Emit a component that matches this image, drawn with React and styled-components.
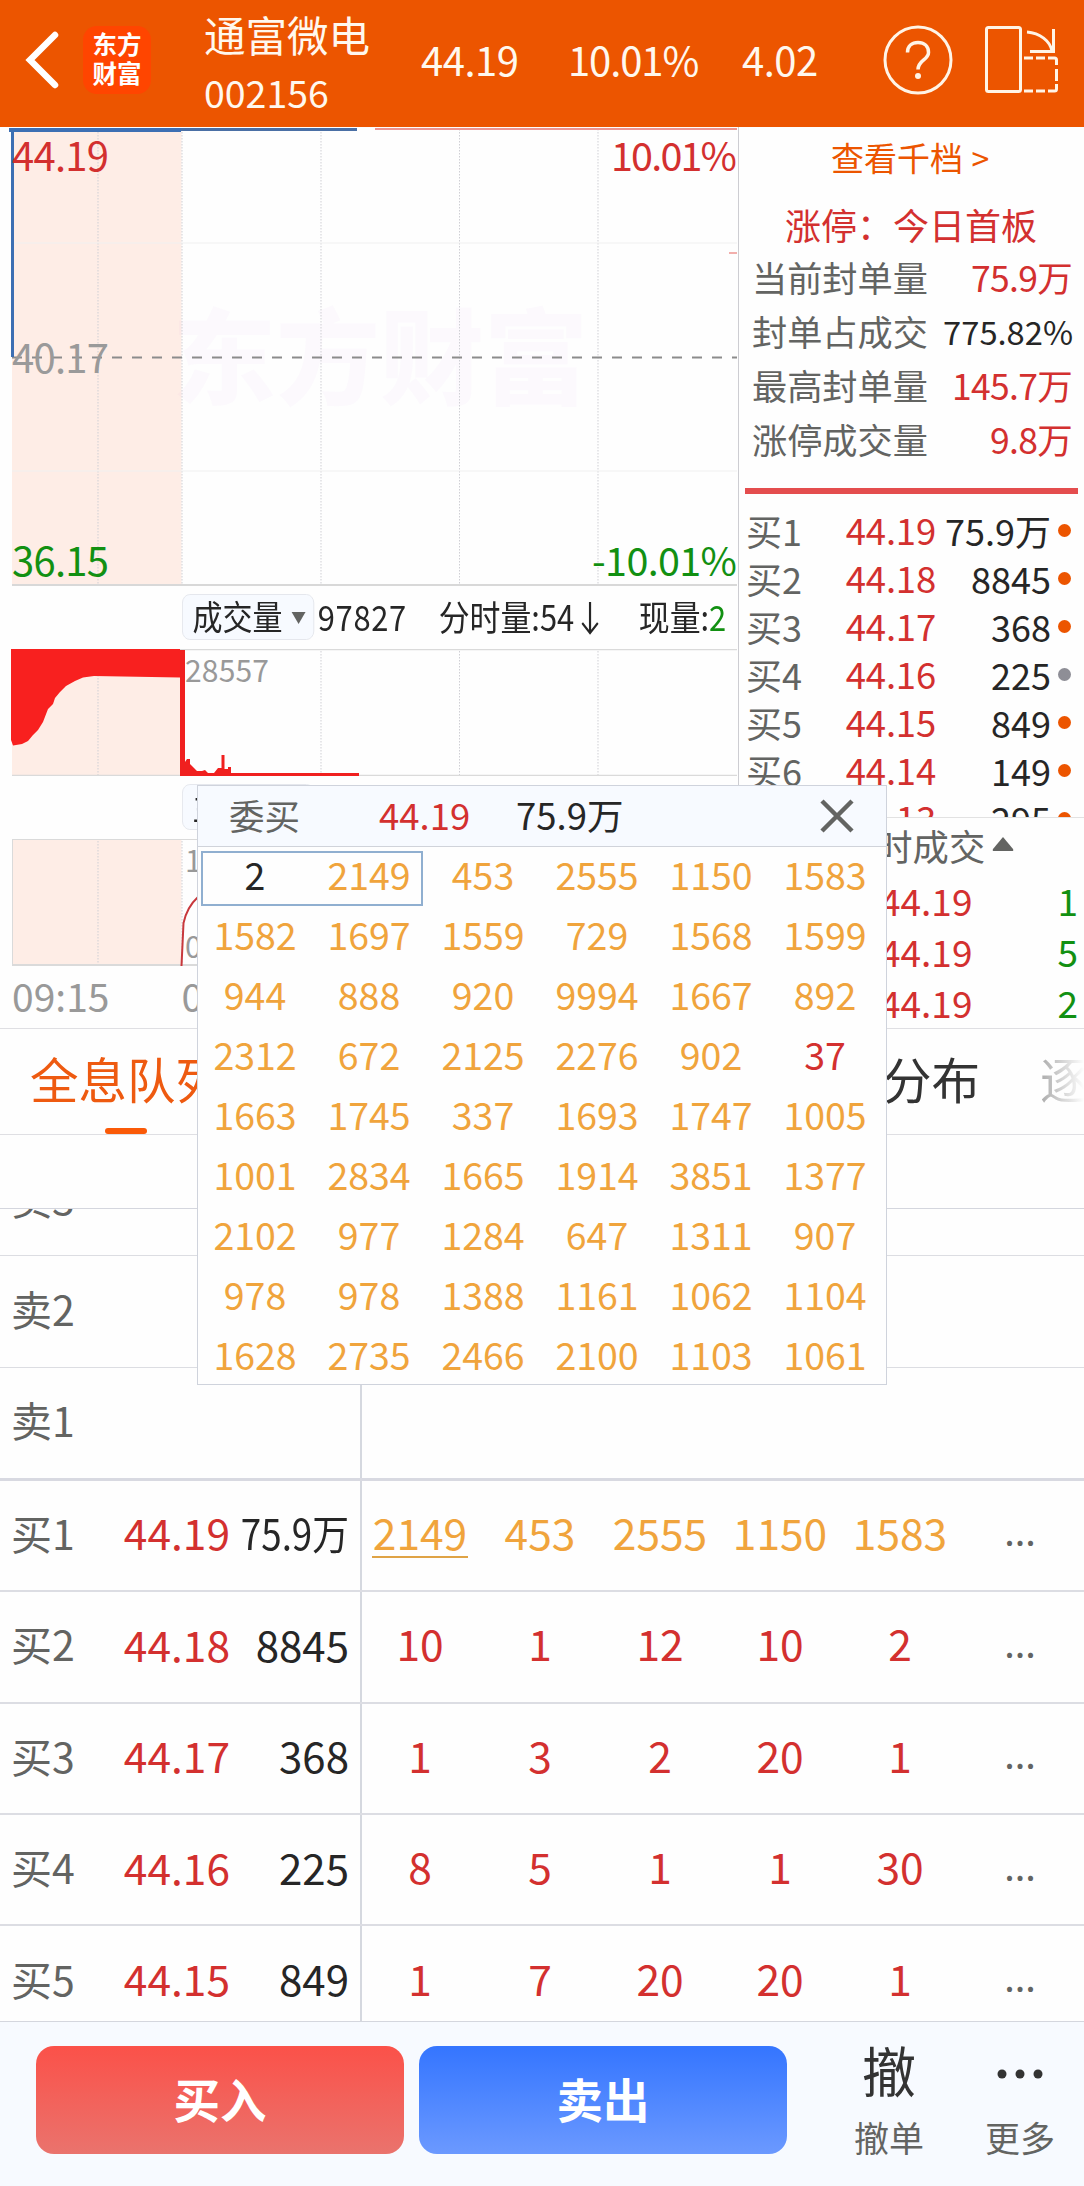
import React from 'react';
import styled, { createGlobalStyle } from 'styled-components';

const RED = '#d3302f';
const GREEN = '#129012';
const ORANGE = '#f0a43c';
const BRAND = '#ec5500';
const DARK = '#262626';
const GREY = '#636462';

const stats = [
  { label: '当前封单量', value: '75.9万', color: RED },
  { label: '封单占成交', value: '775.82%', color: DARK, small: true },
  { label: '最高封单量', value: '145.7万', color: RED },
  { label: '涨停成交量', value: '9.8万', color: RED },
];

const bids = [
  { name: '买1', price: '44.19', volume: '75.9万', dot: BRAND },
  { name: '买2', price: '44.18', volume: '8845', dot: BRAND },
  { name: '买3', price: '44.17', volume: '368', dot: BRAND },
  { name: '买4', price: '44.16', volume: '225', dot: '#8e8e96' },
  { name: '买5', price: '44.15', volume: '849', dot: BRAND },
  { name: '买6', price: '44.14', volume: '149', dot: BRAND },
  { name: '买7', price: '44.13', volume: '295', dot: BRAND },
];

const trades = [
  { price: '44.19', volume: '1' },
  { price: '44.19', volume: '5' },
  { price: '44.19', volume: '2' },
];

const orders = [
  2, 2149, 453, 2555, 1150, 1583,
  1582, 1697, 1559, 729, 1568, 1599,
  944, 888, 920, 9994, 1667, 892,
  2312, 672, 2125, 2276, 902, 37,
  1663, 1745, 337, 1693, 1747, 1005,
  1001, 2834, 1665, 1914, 3851, 1377,
  2102, 977, 1284, 647, 1311, 907,
  978, 978, 1388, 1161, 1062, 1104,
  1628, 2735, 2466, 2100, 1103, 1061,
];

const queueRows = [
  { name: '卖3', queue: [] },
  { name: '卖2', queue: [] },
  { name: '卖1', queue: [], last: true },
  { name: '买1', price: '44.19', volume: '75.9万', narrow: true, big: true, queue: [2149, 453, 2555, 1150, 1583] },
  { name: '买2', price: '44.18', volume: '8845', queue: [10, 1, 12, 10, 2] },
  { name: '买3', price: '44.17', volume: '368', queue: [1, 3, 2, 20, 1] },
  { name: '买4', price: '44.16', volume: '225', queue: [8, 5, 1, 1, 30] },
  { name: '买5', price: '44.15', volume: '849', queue: [1, 7, 20, 20, 1] },
];

const orderColor = (value) => {
  if (value < 10) return DARK;
  return value < 100 ? RED : ORANGE;
};

const gridLines = [98, 182, 321, 459.5, 598];

const Grid = ({ height }) => (
  <>
    {gridLines.map((x) => (
      <line key={x} x1={x} x2={x} y1="2" y2={height} stroke="#cfcfd4" strokeDasharray="1.5 1.5" />
    ))}
  </>
);

const PriceChart = () => (
  <Chart width="737" height="459" viewBox="0 0 737 459">
    <rect x="12" y="1" width="169.5" height="457" fill="#feede6" />
    <text x="172" y="270" fontSize="104" fontWeight="900" fill="#b000c0" fillOpacity="0.018">东方财富</text>
    <Grid height={458} />
    <path d="M12 116H737M12 344H737" stroke="#f0f0f0" />
    <path d="M12 230.5H737" stroke="#8c8c8c" strokeWidth="2" strokeDasharray="10 10" />
    <path d="M12.5 4V230" stroke="#3d6fb3" strokeWidth="3" />
    <path d="M9 3H181" stroke="#3d6fb3" strokeWidth="4" />
    <path d="M181 2.5H357" stroke="#4a6fa5" strokeWidth="3" />
    <path d="M375 2H737" stroke="#ee9490" strokeWidth="2" />
    <path d="M729 126H737" stroke="#ee9490" strokeWidth="1.5" />
    <path d="M12 458H737" stroke="#d8d8d8" strokeWidth="2" />
    <text x="12" y="43.5" fontSize="40" textLength="97" fill={RED}>44.19</text>
    <text x="737" y="43.5" fontSize="39.5" textAnchor="end" textLength="126" fill={RED}>10.01%</text>
    <text x="12" y="246" fontSize="40" textLength="97" fill="#9a9a9a">40.17</text>
    <text x="12" y="448.5" fontSize="40" textLength="97" fill={GREEN}>36.15</text>
    <text x="737" y="448.5" fontSize="39.5" textAnchor="end" textLength="145" fill={GREEN}>-10.01%</text>
  </Chart>
);

const VolumeChart = () => (
  <Chart width="737" height="127" viewBox="0 0 737 127">
    <rect x="12" y="0" width="169.5" height="127" fill="#feede6" />
    <Grid height={126} />
    <path d="M12 .5H737M12 126.5H737" stroke="#dadada" strokeWidth="1.5" />
    <path
      d="M11 0H180V28.5L94 27L83 28.5L75 32L66 37L60 43L55 49L53 55L48 60L43 73L38 81L33 86L28 92L22 95L13 96.5L11 91Z"
      fill="#f8201f"
    />
    <path
      d="M180 1H185V113L187 110H190V115L194 119L197 122H202L205 121L208 124H214L218 119H221.5V106H224.5V120H228V118H231V124H359V127H180Z"
      fill="#f0201f"
    />
    <text x="185" y="33" fontSize="30" textLength="84" fill="#999">28557</text>
  </Chart>
);

const FlowChart = () => (
  <Chart width="737" height="127" viewBox="0 0 737 127">
    <rect x="12" y="0" width="169.5" height="127" fill="#feede6" />
    <Grid height={126} />
    <path d="M12 .5H737M12.5 0V127" stroke="#dadada" fill="none" />
    <path d="M12 126H737" stroke="#dadada" strokeWidth="2" />
    <path d="M181.5 127L183.5 84Q187 68 198 58" fill="none" stroke="#c8383c" strokeWidth="2" />
    <text x="185" y="33" fontSize="30" fill="#999">1.00</text>
    <text x="185" y="119" fontSize="30" fill="#999">0.00</text>
  </Chart>
);

const RotateIcon = () => (
  <svg width="76" height="70" viewBox="0 0 76 70" fill="none" stroke="#fff4e6" strokeWidth="3">
    <rect x="3.5" y="2.5" width="34" height="64" rx="2" />
    <path d="M44 7C57 8 67 16 69 26M70.5 4V26.5H47" />
    <path d="M41 33H50M53 33H62M65 33H71.5Q73.5 33 73.5 35V40M73.5 44V56M73.5 59V64Q73.5 66 71.5 66H65M62 66H53M50 66H41" />
  </svg>
);

const App = () => (
  <>
    <GlobalStyle />
    <Screen>
      <Header>
        <BackIcon width="36" height="60" viewBox="0 0 36 60">
          <path d="M31 5L6 30L31 55" fill="none" stroke="#fff" strokeWidth="6.5" strokeLinecap="round" />
        </BackIcon>
        <Logo>
          <span>东方</span>
          <span>财富</span>
        </Logo>
        <Stock>
          <StockName>通富微电</StockName>
          <StockCode>002156</StockCode>
        </Stock>
        <Quote $width={147}>44.19</Quote>
        <Quote $width={174} $tight>10.01%</Quote>
        <Quote $width={161}>4.02</Quote>
        <svg width="70" height="70" viewBox="0 0 70 70" fill="none" stroke="#fff4e6" strokeWidth="3">
          <circle cx="35" cy="35" r="33" />
          <path d="M24.5 27.5C24.5 21 29 17.5 35 17.5S45.5 21 45.5 27.5C45.5 35 35 35 35 44.5" strokeWidth="3.5" />
          <circle cx="35" cy="51" r="3" fill="#fff4e6" stroke="none" />
        </svg>
        <RotateSlot><RotateIcon /></RotateSlot>
      </Header>

      <Market>
        <ChartColumn>
          <PriceChart />
          <Toolbar>
            <Squeezed>
              <Chip>成交量<Caret /></Chip>
              <Figure $width={145} $loose>97827</Figure>
              <Figure $width={230}>分时量:54<Arrow width="20" height="36" viewBox="0 0 20 36"><path d="M10 2V33M1 23L10 33L19 23" fill="none" stroke={DARK} strokeWidth="2.5" /></Arrow></Figure>
              <Figure>现量:<Down>2</Down></Figure>
            </Squeezed>
          </Toolbar>
          <VolumeChart />
          <Toolbar>
            <Squeezed>
              <Chip>主力量<Caret /></Chip>
            </Squeezed>
          </Toolbar>
          <FlowChart />
          <TimeAxis>
            <span>09:15</span>
            <span>09:30</span>
          </TimeAxis>
        </ChartColumn>

        <Side>
          <MoreDepth>查看千档 <b>&gt;</b></MoreDepth>
          <LimitTitle>涨停：今日首板</LimitTitle>
          {stats.map((item) => (
            <StatRow key={item.label}>
              <StatLabel>{item.label}</StatLabel>
              <StatValue $color={item.color} $small={item.small}>{item.value}</StatValue>
            </StatRow>
          ))}
          <RedBar />
          <BidList>
            {bids.map((bid) => (
              <BidRow key={bid.name}>
                <BidName>{bid.name}</BidName>
                <BidPrice>{bid.price}</BidPrice>
                <BidVolume>{bid.volume}</BidVolume>
                <Dot $color={bid.dot} />
              </BidRow>
            ))}
          </BidList>
          <TradeTitle>分时成交<UpCaret width="22" height="16" viewBox="0 0 22 16"><path d="M11 1L21 13Q22 15 20 15H2Q0 15 1 13Z" fill={GREY} /></UpCaret></TradeTitle>
          {trades.map((trade) => (
            <TradeRow key={trade.volume}>
              <TradePrice>{trade.price}</TradePrice>
              <Down>{trade.volume}</Down>
            </TradeRow>
          ))}
        </Side>
      </Market>

      <Tabs>
        <Tab $active>全息队列</Tab>
        <Tab>成交分布</Tab>
        <Tab $faded>逐笔</Tab>
      </Tabs>
      <Spacer />

      <QueueView>
        <QueueTable>
          {queueRows.map((row) => (
            <QueueRow key={row.name} $last={row.last} $light={!row.price}>
              <QueueInfo>
                <QueueName>{row.name}</QueueName>
                <QueuePrice>{row.price}</QueuePrice>
                <QueueVolume $narrow={row.narrow}>{row.volume}</QueueVolume>
              </QueueInfo>
              <QueueCells>
                {row.queue.map((count, i) => (
                  <QueueCell key={i} $color={row.big ? ORANGE : RED}>
                    {row.big && i === 0 ? <Underlined>{count}</Underlined> : count}
                  </QueueCell>
                ))}
                {row.queue.length > 0 && <Ellipsis>...</Ellipsis>}
              </QueueCells>
            </QueueRow>
          ))}
        </QueueTable>
      </QueueView>

      <Footer>
        <TradeButton $from="#fb5149" $to="#ea736d">买入</TradeButton>
        <TradeButton $from="#3475ff" $to="#6b99ff">卖出</TradeButton>
        <Action $width={202}>
          <ActionGlyph>撤</ActionGlyph>
          <ActionLabel>撤单</ActionLabel>
        </Action>
        <Action $width={58}>
          <ActionGlyph>
            <MoreDots width="48" height="12" viewBox="0 0 48 12" fill="#333">
              <circle cx="6" cy="6" r="4.5" />
              <circle cx="24" cy="6" r="4.5" />
              <circle cx="42" cy="6" r="4.5" />
            </MoreDots>
          </ActionGlyph>
          <ActionLabel>更多</ActionLabel>
        </Action>
      </Footer>

      <Popup>
        <PopupHeader>
          <PopupSide>委买</PopupSide>
          <PopupPrice>44.19</PopupPrice>
          <span>75.9万</span>
          <Close width="34" height="34" viewBox="0 0 34 34">
            <path d="M2 2L32 32M32 2L2 32" stroke={GREY} strokeWidth="4.5" />
          </Close>
        </PopupHeader>
        <OrderGrid>
          {orders.map((value, i) => (
            <Order key={i} $color={orderColor(value)}>{value}</Order>
          ))}
          <Selection />
        </OrderGrid>
      </Popup>
    </Screen>
  </>
);

export default App;

const GlobalStyle = createGlobalStyle`
  * {
    box-sizing: border-box;
  }
  body {
    margin: 0;
    background: #fefefe;
    font-family: 'Noto Sans CJK SC', sans-serif;
    color: ${DARK};
  }
  svg {
    display: block;
    flex: none;
  }
`;

const Screen = styled.div`
  position: relative;
  width: 1084px;
  height: 2186px;
  overflow: hidden;
  display: flex;
  flex-direction: column;
  white-space: nowrap;
`;

const Header = styled.header`
  height: 127px;
  flex: none;
  display: flex;
  align-items: center;
  padding: 0 0 7px 24px;
  background: ${BRAND};
  color: #fff8ee;
`;

const BackIcon = styled.svg`
  margin-right: 23px;
`;

const Logo = styled.div`
  width: 68px;
  height: 68px;
  display: flex;
  flex-direction: column;
  align-items: center;
  padding-top: 3px;
  border-radius: 14px;
  background: #ff4500;
  color: #fff;
  font-size: 24.5px;
  font-weight: 700;
  line-height: 29px;
`;

const Stock = styled.div`
  width: 197px;
  margin-left: 53px;
`;

const StockName = styled.div`
  font-size: 41.5px;
  line-height: 58px;
  margin-top: 6px;
`;

const StockCode = styled.div`
  font-size: 37.5px;
  line-height: 58px;
`;

const Quote = styled.div`
  width: ${(props) => props.$width}px;
  padding: 0 0 3px 20px;
  font-size: 40px;
  letter-spacing: ${(props) => (props.$tight ? '-1.1px' : '-0.5px')};
  line-height: 60px;
`;

const RotateSlot = styled.div`
  margin-left: 30px;
`;

const Market = styled.section`
  display: flex;
  height: 902px;
  flex: none;
  border-bottom: 1px solid #dfdfe3;
`;

const ChartColumn = styled.div`
  width: 739px;
  flex: none;
  border-right: 1px solid #cdcdd2;
`;

const Chart = styled.svg`
  font-family: 'Noto Sans CJK SC', sans-serif;
`;

const Toolbar = styled.div`
  height: 63px;
  display: flex;
  align-items: center;
  padding: 0 0 1px 182px;
`;

/* figures in the indicator bar are set narrower than the rest */
const Squeezed = styled.div`
  display: flex;
  flex: none;
  align-items: center;
  width: 630px;
  transform: scaleX(0.87);
  transform-origin: left;
  font-size: 35.5px;
  line-height: 44px;
`;

const Chip = styled.div`
  display: flex;
  align-items: center;
  width: 152px;
  height: 46px;
  padding: 0 0 4px 11px;
  border: 1px solid #e4e6ec;
  border-radius: 9px;
  background: #f7faff;
  font-size: 34.5px;
`;

const Caret = styled.i`
  margin: 5px 0 0 10px;
  border: 8px solid transparent;
  border-top: 12px solid ${GREY};
  border-bottom: 0;
`;

const Figure = styled.div`
  display: flex;
  width: ${(props) => (props.$width ? `${props.$width}px` : 'auto')};
  padding-bottom: 3px;
  letter-spacing: ${(props) => (props.$loose ? '0.8px' : '0')};
  &:nth-child(2) {
    margin-left: 4px;
  }
  &:nth-child(3) {
    margin-left: -6px;
  }
`;

const Arrow = styled.svg`
  margin: 6px 0 0 8px;
`;

const Down = styled.span`
  color: ${GREEN};
`;

const TimeAxis = styled.div`
  display: flex;
  gap: 72px;
  padding-left: 12px;
  color: #999;
  font-size: 39px;
  line-height: 58px;
`;

const Side = styled.aside`
  flex: 1;
  min-width: 0;
`;

const MoreDepth = styled.div`
  height: 59px;
  padding-left: 92px;
  font-size: 33px;
  line-height: 60px;
  color: ${BRAND};
  b {
    font-weight: 400;
    margin-left: 1px;
    font-size: 32px;
  }
`;

const LimitTitle = styled.div`
  height: 65px;
  padding-left: 46px;
  font-size: 36px;
  line-height: 77px;
  color: ${RED};
`;

const StatRow = styled.div`
  display: flex;
  justify-content: space-between;
  align-items: center;
  height: 54px;
  padding: 0 13px 3px;
`;

const StatLabel = styled.span`
  font-size: 35.2px;
  color: ${GREY};
`;

const StatValue = styled.span`
  font-size: ${(props) => (props.$small ? 32.7 : 35.5)}px;
  letter-spacing: ${(props) => (props.$small ? 0 : -0.7)}px;
  margin-right: ${(props) => (props.$small ? -2 : -1)}px;
  color: ${(props) => props.$color};
`;

const RedBar = styled.div`
  height: 6px;
  margin: 21px 6px 14px;
  background: #e44d4e;
`;

const BidList = styled.div`
  height: 310px;
  overflow: hidden;
  border-bottom: 1px solid #e2e2e2;
`;

const BidRow = styled.div`
  display: flex;
  align-items: center;
  height: 48px;
  padding: 0 13px 5px 7px;
`;

const BidName = styled.span`
  width: 80px;
  font-size: 36px;
  color: ${GREY};
`;

const BidPrice = styled.span`
  width: 110px;
  text-align: right;
  font-size: 36.5px;
  letter-spacing: -0.2px;
  color: ${RED};
`;

const BidVolume = styled.span`
  width: 115px;
  text-align: right;
  font-size: 36px;
`;

const Dot = styled.i`
  width: 13px;
  height: 13px;
  margin: 1px 0 0 auto;
  border-radius: 50%;
  background: ${(props) => props.$color};
`;

const TradeTitle = styled.div`
  display: flex;
  align-items: center;
  height: 57px;
  padding: 0 0 3px 101px;
  font-size: 36.3px;
  color: ${GREY};
`;

const UpCaret = styled.svg`
  margin: -2px 0 0 7px;
`;

const TradeRow = styled.div`
  display: flex;
  justify-content: space-between;
  align-items: center;
  height: 51px;
  padding: 0 6px 2px 141px;
  font-size: 37px;
`;

const TradePrice = styled.span`
  color: ${RED};
`;

const Tabs = styled.nav`
  display: flex;
  height: 106px;
  flex: none;
  padding-left: 30px;
  border-bottom: 1px solid #dfdfe3;
`;

const Tab = styled.div`
  flex: none;
  display: flex;
  flex-direction: column;
  font-size: 48.5px;
  line-height: 99px;
  color: ${(props) => (props.$active ? '#ee5a10' : '#333')};
  &:nth-child(2) {
    margin-left: 562px;
  }
  &:nth-child(3) {
    margin-left: 60px;
  }
  ${(props) => props.$active && `
    &::after {
      content: '';
      width: 42px;
      height: 6px;
      margin: 0 0 0 75px;
      border-radius: 3px;
      background: #fa5a08;
    }
  `}
  ${(props) => props.$faded && `
    color: transparent;
    background: linear-gradient(90deg, #aaa, #fefefe 44px);
    background-clip: text;
  `}
`;

const Spacer = styled.div`
  height: 74px;
  flex: none;
  border-bottom: 1px solid #d4d6de;
`;

const QueueView = styled.section`
  height: 812px;
  flex: none;
  overflow: hidden;
`;

const QueueTable = styled.div`
  margin-top: -64px;
`;

const QueueRow = styled.div`
  display: flex;
  height: ${(props) => (props.$last ? 113 : 111.4)}px;
  border-bottom: ${(props) => {
    if (props.$last) return '3px solid #d8d9e1';
    return props.$light ? '1px solid #dcdde2' : '2px solid #dcdde3';
  }};
`;

const QueueInfo = styled.div`
  display: flex;
  align-items: center;
  width: 362px;
  flex: none;
  padding: 0 11px 7px 11px;
  border-right: 2px solid #d5d8df;
`;

const QueueName = styled.span`
  width: 100px;
  flex: none;
  font-size: 41px;
  color: ${GREY};
`;

const QueuePrice = styled.span`
  width: 119px;
  flex: none;
  text-align: right;
  font-size: 42.5px;
  color: ${RED};
`;

const QueueVolume = styled.span`
  flex: 1;
  min-width: 0;
  display: flex;
  justify-content: flex-end;
  font-size: 42px;
  transform: ${(props) => (props.$narrow ? 'scaleX(0.875)' : 'none')};
  transform-origin: right;
`;

const QueueCells = styled.div`
  display: grid;
  grid-template-columns: repeat(6, 120px);
  align-items: center;
  margin-left: -2px;
  padding-bottom: 8px;
`;

const QueueCell = styled.span`
  text-align: center;
  font-size: 42.5px;
  color: ${(props) => props.$color};
`;

const Ellipsis = styled(QueueCell)`
  padding-bottom: 3px;
  font-size: 38px;
  color: ${GREY};
`;

const Underlined = styled.span`
  display: inline-block;
  height: 48px;
  line-height: 44px;
  padding: 0 1px;
  border-bottom: 2px solid #dfa345;
`;

const Footer = styled.footer`
  display: flex;
  flex: 1;
  gap: 15px;
  padding: 24px 0 0 36px;
  border-top: 1px solid #d4d6de;
  background: #f7faff;
`;

const TradeButton = styled.button`
  width: 368px;
  height: 108px;
  flex: none;
  padding: 0 0 5px;
  border: 0;
  border-radius: 18px;
  background: linear-gradient(${(props) => props.$from}, ${(props) => props.$to});
  color: #fff;
  font-family: inherit;
  font-size: 46.5px;
  font-weight: 700;
`;

const Action = styled.div`
  display: flex;
  flex-direction: column;
  align-items: center;
  width: ${(props) => props.$width}px;
  margin-left: -14px;
`;

const ActionGlyph = styled.div`
  display: flex;
  align-items: center;
  height: 54px;
  margin-top: -3px;
  font-size: 54px;
  line-height: 54px;
  color: #333;
`;

const MoreDots = styled.svg`
  margin-top: 7px;
`;

const ActionLabel = styled.div`
  margin-top: 14px;
  font-size: 35px;
  line-height: 52px;
  color: ${GREY};
`;

const Popup = styled.div`
  position: absolute;
  left: 197px;
  top: 785px;
  width: 690px;
  height: 600px;
  overflow: hidden;
  border: 1px solid #cfd3dc;
  background: #fefefe;
`;

const PopupHeader = styled.div`
  display: flex;
  align-items: center;
  height: 61px;
  padding: 0 32px 4px 31px;
  border-bottom: 1px solid #d0d3da;
  background: #f7faff;
  font-size: 36.5px;
`;

const PopupSide = styled.span`
  width: 150px;
  font-size: 35.5px;
  color: ${GREY};
`;

const PopupPrice = styled.span`
  width: 137px;
  color: ${RED};
`;

const Close = styled.svg`
  margin: 4px 0 0 auto;
`;

const OrderGrid = styled.div`
  position: relative;
  display: grid;
  grid-template-columns: repeat(6, 114px);
  grid-auto-rows: 60px;
`;

const Order = styled.div`
  text-align: center;
  font-size: 37.5px;
  line-height: 54px;
  color: ${(props) => props.$color};
`;

const Selection = styled.div`
  position: absolute;
  left: 3px;
  top: 4px;
  width: 222px;
  height: 55px;
  border: 2px solid #90afd0;
`;
